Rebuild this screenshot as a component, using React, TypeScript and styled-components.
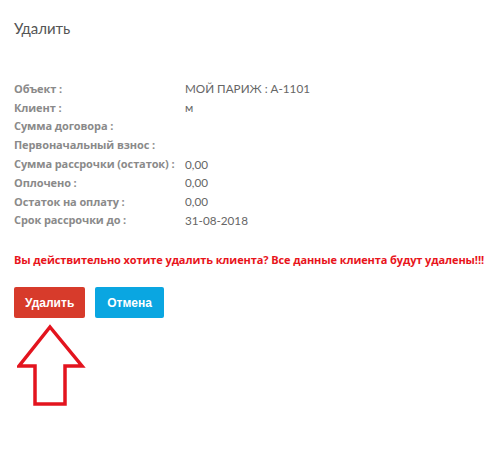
import React from "react";
import styled, { createGlobalStyle } from "styled-components";

const Global = createGlobalStyle`
  html, body { margin: 0; padding: 0; background: #fff; }
  body { width: 492px; height: 476px; overflow: hidden; }
`;

const Page = styled.div`
  padding: 18px 14px 0 14px;
  display: flex;
  flex-direction: column;
`;

const Title = styled.h3`
  margin: 0;
  font-family: Lato, "Open Sans", sans-serif;
  font-weight: 400;
  font-size: 15px;
  line-height: 20px;
  color: #555;
`;

const InfoTable = styled.div`
  margin-top: 41px;
  display: grid;
  grid-template-columns: 171px 1fr;
  grid-auto-rows: 18.8px;
  align-items: center;
`;

const Label = styled.div`
  font-family: "Open Sans", sans-serif;
  font-weight: 700;
  font-size: 11px;
  letter-spacing: -0.1px;
  color: #8a8a8a;
  white-space: nowrap;
`;

const Value = styled.div`
  font-family: Lato, "Open Sans", sans-serif;
  font-size: 11.7px;
  color: #666;
  white-space: nowrap;
`;

const Warning = styled.p`
  margin: 23px 0 0 0;
  font-family: "Open Sans", sans-serif;
  font-weight: 700;
  font-size: 11px;
  letter-spacing: -0.1px;
  line-height: 16px;
  color: #e8141b;
  white-space: nowrap;
`;

const Actions = styled.div`
  margin-top: 19px;
  display: flex;
  gap: 10px;
`;

const Button = styled.button<{ $variant: "danger" | "info" }>`
  height: 31px;
  padding: 0 ${(p) => (p.$variant === "danger" ? 11 : 12)}px;
  border: none;
  border-radius: 2px;
  background: ${(p) => (p.$variant === "danger" ? "#d73b2b" : "#0aa6e1")};
  color: #fff;
  font-family: "Liberation Sans", Arial, sans-serif;
  font-weight: 700;
  font-size: 12px;
  cursor: pointer;
`;

const ArrowWrap = styled.div`
  margin-top: 6px;
  margin-left: 3px;
  width: 70px;
  height: 84px;
`;

const rows: [string, string][] = [
  ["Объект :", "МОЙ ПАРИЖ : А-1101"],
  ["Клиент :", "м"],
  ["Сумма договора :", ""],
  ["Первоначальный взнос :", ""],
  ["Сумма рассрочки (остаток) :", "0,00"],
  ["Оплочено :", "0,00"],
  ["Остаток на оплату :", "0,00"],
  ["Срок рассрочки до :", "31-08-2018"],
];

export default function App() {
  return (
    <>
      <Global />
      <Page>
        <Title>Удалить</Title>
        <InfoTable>
          {rows.map(([l, v]) => (
            <React.Fragment key={l}>
              <Label>{l}</Label>
              <Value>{v}</Value>
            </React.Fragment>
          ))}
        </InfoTable>
        <Warning>
          Вы действительно хотите удалить клиента? Все данные клиента будут удалены!!!
        </Warning>
        <Actions>
          <Button $variant="danger">Удалить</Button>
          <Button $variant="info">Отмена</Button>
        </Actions>
        <ArrowWrap>
          <svg width="70" height="84" viewBox="0 0 70 84">
            <polygon
              points="33,3 65,42 48,42 48,80 18,80 18,42 2,42"
              fill="none"
              stroke="#e3141e"
              strokeWidth="3.5"
              strokeLinejoin="miter"
            />
          </svg>
        </ArrowWrap>
      </Page>
    </>
  );
}
